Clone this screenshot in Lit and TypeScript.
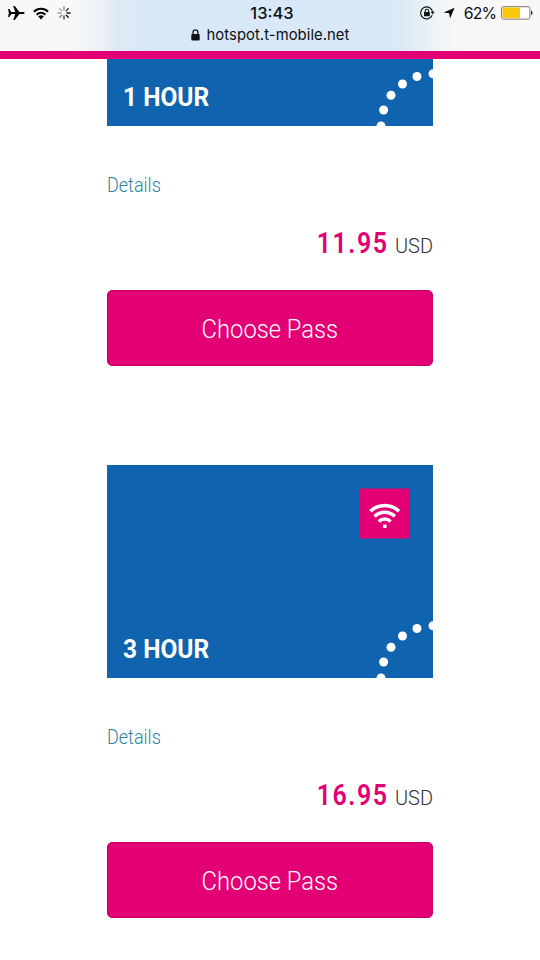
import { LitElement, html, css, svg } from "lit";
import { customElement, property } from "lit/decorators.js";

const DOTS = [[326, 160.7], [310, 163.5], [295.5, 171], [284, 182.3], [276.6, 197], [274, 213]];
const SPOKES = ["#222", "#111", "#000", "#333", "#777", "#999", "#aaa", "#888"];

@customElement("status-bar")
class StatusBar extends LitElement {
  static styles = css`
    :host { display: block; flex: none; height: 51px; box-sizing: border-box;
      background: linear-gradient(90deg, #f8f8f8 0, #f7f8f9 70px, #edf1f5 100px, #dfeaf6 115px, #d9e8f6 150px, #d9e8f6 390px, #e2edf6 415px, #f3f6f8 445px, #f8f8f8 475px);
      color: #0c1015; font-family: Inter, sans-serif; }
    .row { display: grid; grid-template-columns: 1fr auto 1fr; height: 26px; align-items: center; }
    svg { display: block; flex: none; }
    .left { display: flex; align-items: center; padding-left: 7px; gap: 8px; }
    .time { font-size: 16.5px; font-weight: 500; letter-spacing: 0; padding-left: 4px; }
    .right { display: flex; align-items: center; justify-content: flex-end; padding-right: 7px; }
    .pct { font-size: 15.8px; letter-spacing: -0.9px; margin: 1px 5px 0 9px; }
    .arrow { margin-left: 8px; }
    .url { display: flex; justify-content: center; align-items: center; gap: 7px; height: 18px;
      font-size: 14.8px; letter-spacing: 0.06px; }
    .lock { margin-top: -1px; }
  `;
  render() {
    return html`
      <div class="row">
        <div class="left">
          <svg width="18" height="16" viewBox="0 0 18 16"><path d="M1 4h1.3l2 3h4L6.2 1h1.6l4.6 6h4c1.6 0 1.6 2 0 2h-4l-4.6 6H6.2l2.1-6h-4l-2 3H1l.9-4z" fill="#050505"/></svg>
          <svg width="16" height="13" viewBox="0 0 16 13"><g fill="none" stroke="#050505" stroke-width="2"><path d="M.9 4.8a10 10 0 0 1 14.2 0"/><path d="M3.6 7.7a6.2 6.2 0 0 1 8.8 0"/></g><path d="M8 12.4 5.2 9.5a4 4 0 0 1 5.6 0z" fill="#050505"/></svg>
          <svg width="14" height="14" viewBox="-7 -7 14 14">${SPOKES.map((c, i) => svg`<path d="M0-3V-6" stroke=${c} stroke-width="1.3" stroke-linecap="round" transform="rotate(${i * 45 + 45})"/>`)}</svg>
        </div>
        <div class="time">13:43</div>
        <div class="right">
          <svg width="15" height="14" viewBox="0 0 15 14"><path d="M12.2 9.2A6 6 0 1 1 12.6 6" fill="none" stroke="#111" stroke-width="1.1"/><path d="m10.6 5.8 2.2 2.8 1.8-2.8z" fill="#111"/><rect x="4" y="6" width="5.8" height="4.3" rx=".5" fill="#111"/><path d="M5.2 6.2V5a1.7 1.7 0 0 1 3.4 0v1.2" fill="none" stroke="#111" stroke-width="1.1"/></svg>
          <svg class="arrow" width="12" height="12" viewBox="0 0 12 12"><path d="M11.6.7 7 11.5 6.2 6.2.6 5.6z" fill="#080808"/></svg>
          <span class="pct">62%</span>
          <svg width="32" height="14" viewBox="0 0 32 14"><rect x=".6" y=".7" width="28.3" height="12.4" rx="1.8" fill="#fff" stroke="#777" stroke-width="1"/><rect x="1.5" y="1.6" width="17.6" height="10.6" rx=".6" fill="#fdc70c"/><path d="M30 4.6c2 .7 2 4 0 4.7z" fill="#333"/></svg>
        </div>
      </div>
      <div class="url">
        <svg class="lock" width="9" height="12" viewBox="0 0 9 12"><rect x=".3" y="5" width="8.4" height="6.6" rx="1" fill="#111"/><path d="M2.1 5.5V3.3a2.4 2.4 0 0 1 4.8 0v2.2" fill="none" stroke="#111" stroke-width="1.3"/></svg>
        <span>hotspot.t-mobile.net</span>
      </div>`;
  }
}

@customElement("pass-card")
class PassCard extends LitElement {
  @property() name = "";
  @property() price = "";
  static styles = css`
    :host { display: block; width: 326px; font-family: Roboto, sans-serif; }
    .hero { position: relative; display: flex; align-items: flex-end; height: 213px; box-sizing: border-box;
      padding: 0 0 13px 16px; background: #1063ae; }
    .art { position: absolute; inset: 0; }
    .name { color: #fff; font-size: 25px; line-height: 30px; font-weight: 700; transform: scaleX(.98); transform-origin: left; white-space: pre; }
    .details { display: block; width: max-content; margin-top: 46px; font-size: 20px; line-height: 26px; font-weight: 300; color: #2784a0;
      text-decoration: none; transform: scaleX(.9); transform-origin: left; }
    .cost { display: flex; justify-content: flex-end; align-items: baseline; gap: 5px; margin-top: 25px; height: 41px; line-height: 40px; }
    .amount { color: #e20074; font-size: 29px; font-weight: 600; letter-spacing: 1.8px; margin-right: -1px; transform: scaleX(.86); transform-origin: right; }
    .unit { color: #333; font-size: 21px; font-weight: 300; transform: scaleX(.95); transform-origin: right; }
    button { display: flex; align-items: center; justify-content: center; width: 100%; height: 76px; margin: 26px 0 0; padding: 2px 0 0;
      border: 1px solid #c90369; border-radius: 5px; background: #e20074; color: #fff; font: 300 25px Roboto, sans-serif; }
    .label { transform: scaleX(.95); white-space: nowrap; }
  `;
  render() {
    return html`
      <div class="hero">
        <svg class="art" width="326" height="213" viewBox="0 0 326 213">
          <rect x="253" y="23.5" width="50" height="50" fill="#e20074"/>
          <g fill="none" stroke="#fff" stroke-width="3.5">
            <path d="M263.4 46.3a20.5 20.5 0 0 1 28.6 0"/><path d="M267.6 51.4a14.5 14.5 0 0 1 20.2 0"/><path d="M271.8 56.4a8.5 8.5 0 0 1 11.8 0"/>
          </g>
          <rect x="276" y="59.4" width="3.6" height="3.6" rx=".7" fill="#fff"/>
          ${DOTS.map(([x, y]) => svg`<circle cx=${x} cy=${y} r="4.5" fill="#fff"/>`)}
        </svg>
        <span class="name">${this.name}</span>
      </div>
      <a class="details">Details</a>
      <div class="cost"><span class="amount">${this.price}</span><span class="unit">USD</span></div>
      <button><span class="label">Choose Pass</span></button>`;
  }
}

@customElement("app-root")
class AppRoot extends LitElement {
  static styles = css`
    :host { display: flex; flex-direction: column; width: 540px; height: 960px; overflow: hidden; background: #fff; }
    .accent { flex: none; height: 8px; background: #e20074; }
    main { flex: 1; min-height: 0; overflow: hidden; display: flex; flex-direction: column; align-items: center; gap: 99px; }
    pass-card { flex: none; }
    pass-card:first-child { margin-top: -146px; }
  `;
  render() {
    return html`<status-bar></status-bar><div class="accent"></div>
      <main><pass-card name="1 HOUR" price="11.95"></pass-card><pass-card name="3 HOUR" price="16.95"></pass-card></main>`;
  }
}
